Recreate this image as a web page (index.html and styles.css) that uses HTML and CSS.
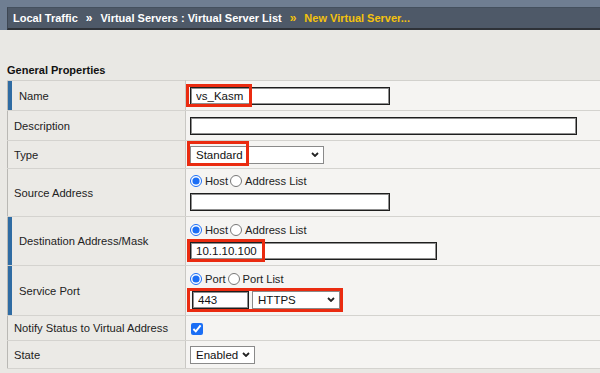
FILE: index.html
```html
<!DOCTYPE html>
<html lang="en">
<head>
  <meta charset="UTF-8">
  <title>New Virtual Server</title>
  <link rel="stylesheet" href="styles.css">
</head>
<body>
  <!-- Breadcrumb Header -->
  <div class="header">
    <div class="crumbs">
      <span>Local Traffic</span>
      <span class="sep">&raquo;</span>
      <span>Virtual Servers : Virtual Server List</span>
      <span class="sep current">&raquo;</span>
      <span class="current">New Virtual Server...</span>
    </div>
  </div>

  <h3 class="section-title">General Properties</h3>

  <!-- Properties Table -->
  <table class="props">
    <colgroup>
      <col class="col-label">
      <col class="col-value">
    </colgroup>
    <tr class="row-name required">
      <td class="label">Name</td>
      <td class="value">
        <span class="field">
          <input type="text" class="txt w-200" value="vs_Kasm">
          <span class="mark mark-name"></span>
        </span>
      </td>
    </tr>
    <tr class="row-desc">
      <td class="label">Description</td>
      <td class="value"><input type="text" class="txt w-387"></td>
    </tr>
    <tr class="row-type">
      <td class="label">Type</td>
      <td class="value">
        <span class="field">
          <span class="select w-134">
            <select><option>Standard</option></select>
            <svg class="chev" viewBox="0 0 8 5"><path d="M1 1 L4 4 L7 1"/></svg>
          </span>
          <span class="mark mark-type"></span>
        </span>
      </td>
    </tr>
    <tr class="row-source">
      <td class="label">Source Address</td>
      <td class="value">
        <div class="radios">
          <label><input type="radio" name="src" checked>Host</label>
          <label><input type="radio" name="src">Address List</label>
        </div>
        <input type="text" class="txt w-200">
      </td>
    </tr>
    <tr class="row-dest required">
      <td class="label">Destination Address/Mask</td>
      <td class="value">
        <div class="radios">
          <label><input type="radio" name="dst" checked>Host</label>
          <label><input type="radio" name="dst">Address List</label>
        </div>
        <span class="field">
          <input type="text" class="txt w-247" value="10.1.10.100">
          <span class="mark mark-dest"></span>
        </span>
      </td>
    </tr>
    <tr class="row-port required">
      <td class="label">Service Port</td>
      <td class="value">
        <div class="radios">
          <label><input type="radio" name="port" checked>Port</label>
          <label><input type="radio" name="port">Port List</label>
        </div>
        <span class="field port-field">
          <input type="text" class="txt w-56" value="443">
          <span class="select w-88">
            <select><option>HTTPS</option></select>
            <svg class="chev" viewBox="0 0 8 5"><path d="M1 1 L4 4 L7 1"/></svg>
          </span>
          <span class="mark mark-port"></span>
        </span>
      </td>
    </tr>
    <tr class="row-notify">
      <td class="label">Notify Status to Virtual Address</td>
      <td class="value"><input type="checkbox" class="chk" checked></td>
    </tr>
    <tr class="row-state">
      <td class="label">State</td>
      <td class="value">
        <span class="select w-65">
          <select><option>Enabled</option></select>
          <svg class="chev" viewBox="0 0 8 5"><path d="M1 1 L4 4 L7 1"/></svg>
        </span>
      </td>
    </tr>
  </table>
</body>
</html>
```

FILE: styles.css
```css
/* General Styles */
body {
  margin: 0;
  width: 600px;
  height: 373px;
  overflow: hidden;
  background-color: #e9e8e4;
  font-family: 'Liberation Sans', Arial, sans-serif;
  font-size: 11px;
  color: #222;
}

/* Breadcrumb Header */
.header {
  height: 30px;
  padding: 7px 0 0 7px;
  box-sizing: border-box;
  background-color: #6f7e92;
}

.crumbs {
  height: 23px;
  display: flex;
  align-items: center;
  gap: 8px;
  padding-left: 5px;
  box-sizing: border-box;
  background-color: #4e5968;
  border-left: 1px solid #3e4753;
  border-top: 1px solid #44505e;
  border-bottom: 2px solid #2e3238;
  color: #fff;
  font-size: 11px;
  font-weight: bold;
  white-space: nowrap;
}

.crumbs .sep {
  font-size: 12px;
}

.crumbs .current {
  color: #f4c20d;
}

.section-title {
  margin: 0;
  padding: 34px 0 4px 7px;
  height: 50px;
  box-sizing: border-box;
  font-size: 11px;
  line-height: 12px;
  color: #111;
}

/* Properties Table */
.props {
  margin-left: 7px;
  width: 600px;
  border-collapse: collapse;
  table-layout: fixed;
  border-left: 1px solid #b9b8b4;
  border-top: 1px solid #d2d1cd;
}

.col-label { width: 178px; }

.props td {
  border-bottom: 1px solid #d4d3cf;
  padding: 0;
  vertical-align: middle;
}

.props .label {
  padding-left: 6px;
  background-color: #ebeae6;
  border-right: 1px solid #c9c8c4;
  color: #222;
  font-size: 11.2px;
  white-space: nowrap;
}

.props .required .label {
  padding-left: 11px;
  box-shadow: inset 4px 0 0 #2f6ca3;
}

.props .value {
  padding-left: 4px;
  background-color: #f5f4f2;
}

.row-name { height: 30px; }
.row-desc { height: 30px; }
.row-type { height: 28px; }
.row-source { height: 48px; }
.row-dest { height: 49px; }
.row-port { height: 50px; }
.row-notify { height: 25px; }
.row-state { height: 28px; }

/* Form Controls */
.txt {
  height: 18px;
  padding: 0 5px;
  margin: 0;
  border: 1px solid #1e1e1e;
  box-shadow: inset 0 0 0 1px #8f8f8f;
  background-color: #fff;
  font-family: 'Liberation Sans', Arial, sans-serif;
  font-size: 11.5px;
  color: #111;
  box-sizing: border-box;
  vertical-align: middle;
}

.select {
  position: relative;
  display: inline-block;
  height: 18px;
  vertical-align: middle;
}

.select select {
  appearance: none;
  width: 100%;
  height: 18px;
  margin: 0;
  padding: 0 14px 0 5px;
  border: 1px solid #8a8a8a;
  border-radius: 0;
  background-color: #fff;
  font-family: 'Liberation Sans', Arial, sans-serif;
  font-size: 11.5px;
  color: #111;
  box-sizing: border-box;
}

.select .chev {
  position: absolute;
  right: 5px;
  top: 6px;
  width: 8px;
  height: 5px;
  fill: none;
  stroke: #222;
  stroke-width: 1.8;
  pointer-events: none;
}

.w-200 { width: 200px; }
.w-387 { width: 387px; }
.w-247 { width: 247px; }
.w-134 { width: 134px; }
.w-56 { width: 57px; }
.w-88 { width: 88px; }
.w-65 { width: 65px; }

.radios {
  display: flex;
  align-items: center;
  height: 14px;
  margin-bottom: 5px;
  font-size: 11.2px;
}

.radios label {
  display: flex;
  align-items: center;
  margin-right: 2px;
}

.radios input {
  margin: 0 3px 0 0;
  width: 12px;
  height: 12px;
  accent-color: #1b6ef5;
}

.chk {
  margin: 0 0 0 1px;
  width: 12px;
  height: 12px;
  accent-color: #1b6ef5;
  vertical-align: middle;
}

.port-field {
  display: inline-flex;
  gap: 3px;
  margin-left: 2px;
}

/* Highlight Annotations */
.field {
  position: relative;
  display: inline-block;
  vertical-align: middle;
}

.mark {
  position: absolute;
  border: 3px solid #ea2b10;
  box-sizing: border-box;
  pointer-events: none;
}

.mark-name { left: -4px; top: -3px; width: 66px; height: 23px; }
.mark-type { left: -3px; top: -5px; width: 62px; height: 25px; }
.mark-dest { left: -3px; top: -3px; width: 78px; height: 23px; }
.mark-port { left: -5px; top: -3px; width: 156px; height: 24px; }
```
